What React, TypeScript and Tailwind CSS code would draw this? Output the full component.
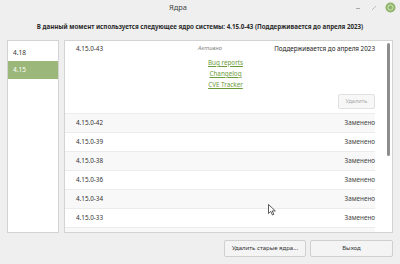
import React from "react";

const rows = [
  "4.15.0-42",
  "4.15.0-39",
  "4.15.0-38",
  "4.15.0-36",
  "4.15.0-34",
  "4.15.0-33",
];

const App = () => {
  return (
    <div
      className="relative w-[400px] h-[264px] bg-[#efefef] flex flex-col text-[#333] overflow-hidden"
      style={{ fontFamily: '"Noto Sans", "DejaVu Sans", sans-serif' }}
    >
      {/* title bar */}
      <div className="relative h-[15px] flex items-center justify-center shrink-0">
        <span className="text-[7.5px] text-[#444] leading-none mr-[44px]">Ядра</span>
        <div className="absolute right-[4px] top-[2px] flex items-center gap-[6px]">
          <svg width="10" height="10" viewBox="0 0 10 10">
            <line x1="3" y1="5.5" x2="7" y2="5.5" stroke="#aaa" strokeWidth="1" />
          </svg>
          <svg width="10" height="10" viewBox="0 0 10 10">
            <line x1="3" y1="7" x2="7" y2="3" stroke="#bbb" strokeWidth="1" />
          </svg>
          <svg width="11" height="11" viewBox="0 0 11 11">
            <circle cx="5.5" cy="5.5" r="5" fill="#8fb56a" />
            <circle cx="5.5" cy="5.5" r="2.6" fill="none" stroke="#d5e6c2" strokeWidth="1" />
          </svg>
        </div>
      </div>

      {/* header */}
      <div className="h-[25px] flex items-center justify-center shrink-0">
        <span className="text-[6.2px] font-bold text-[#2a2a2a] leading-none">
          В данный момент используется следующее ядро системы: 4.15.0-43 (Поддерживается до апреля 2023)
        </span>
      </div>

      {/* panels */}
      <div className="flex gap-[5px] px-[7px] h-[193px] shrink-0">
        <div className="w-[52px] bg-white border border-[#d3d3d3] flex flex-col pt-[2px] text-[6.5px]">
          <div className="h-[18px] flex items-center pl-[5px] pt-[2px] text-[#333]">4.18</div>
          <div className="h-[18px] flex items-center pl-[5px] bg-[#9bb77a] text-white">4.15</div>
        </div>

        <div className="relative flex-1 bg-white border border-[#d3d3d3] overflow-hidden text-[6.3px]">
          <div className="flex flex-col pr-[17px]">
            {/* expanded row */}
            <div className="h-[73px] border-b border-[#ececec] flex flex-col">
              <div className="flex items-center h-[13px] mt-[1px] pl-[11px]">
                <span className="w-[122px]">4.15.0-43</span>
                <span className="w-[24px] text-center italic text-[#888] text-[5.8px]">Активно</span>
                <span className="flex-1 text-right text-[#222]">Поддерживается до апреля 2023</span>
              </div>
              <div className="flex flex-col items-center w-[55px] ml-[133px] mt-[2px] leading-[11px] text-[#6b9a3c]">
                <span className="underline">Bug reports</span>
                <span className="underline">Changelog</span>
                <span className="underline">CVE Tracker</span>
              </div>
              <div className="flex justify-end mt-[4px]">
                <button className="w-[37px] h-[15px] border border-[#e0e0e0] rounded-[2px] bg-[#f7f7f7] text-[5.6px] text-[#aaa]">
                  Удалить
                </button>
              </div>
            </div>
            {rows.map((r, i) => (
              <div
                key={r}
                className={
                  "h-[19px] shrink-0 border-b border-[#ececec] flex items-center justify-between pl-[11px] " +
                  (i % 2 === 0 ? "bg-[#f8f8f8]" : "bg-white")
                }
              >
                <span>{r}</span>
                <span className="text-[#444]">Заменено</span>
              </div>
            ))}
            <div className="h-[19px] shrink-0 bg-[#f8f8f8]" />
          </div>
          {/* scrollbar */}
          <div className="absolute right-[2px] top-[2px] w-[3px] h-[113px] rounded-full bg-[#8d8d8d]" />
        </div>
      </div>

      {/* footer */}
      <div className="flex justify-end gap-[4px] pr-[7px] pt-[7px]">
        <button className="w-[82px] h-[17px] border border-[#cfcfcf] rounded-[2px] bg-[#f4f4f4] text-[6px] text-[#333]">
          Удалить старые ядра...
        </button>
        <button className="w-[83px] h-[17px] border border-[#cfcfcf] rounded-[2px] bg-[#f4f4f4] text-[6px] text-[#333]">
          Выход
        </button>
      </div>

      {/* mouse pointer */}
      <svg className="absolute left-[268px] top-[204px]" width="8" height="12" viewBox="0 0 8 12">
        <path d="M0.5 0.5 L0.5 9.5 L2.8 7.4 L4.4 11 L5.8 10.4 L4.3 6.9 L7.3 6.9 Z" fill="#fff" stroke="#333" strokeWidth="0.8" />
      </svg>
    </div>
  );
};

export default App;
